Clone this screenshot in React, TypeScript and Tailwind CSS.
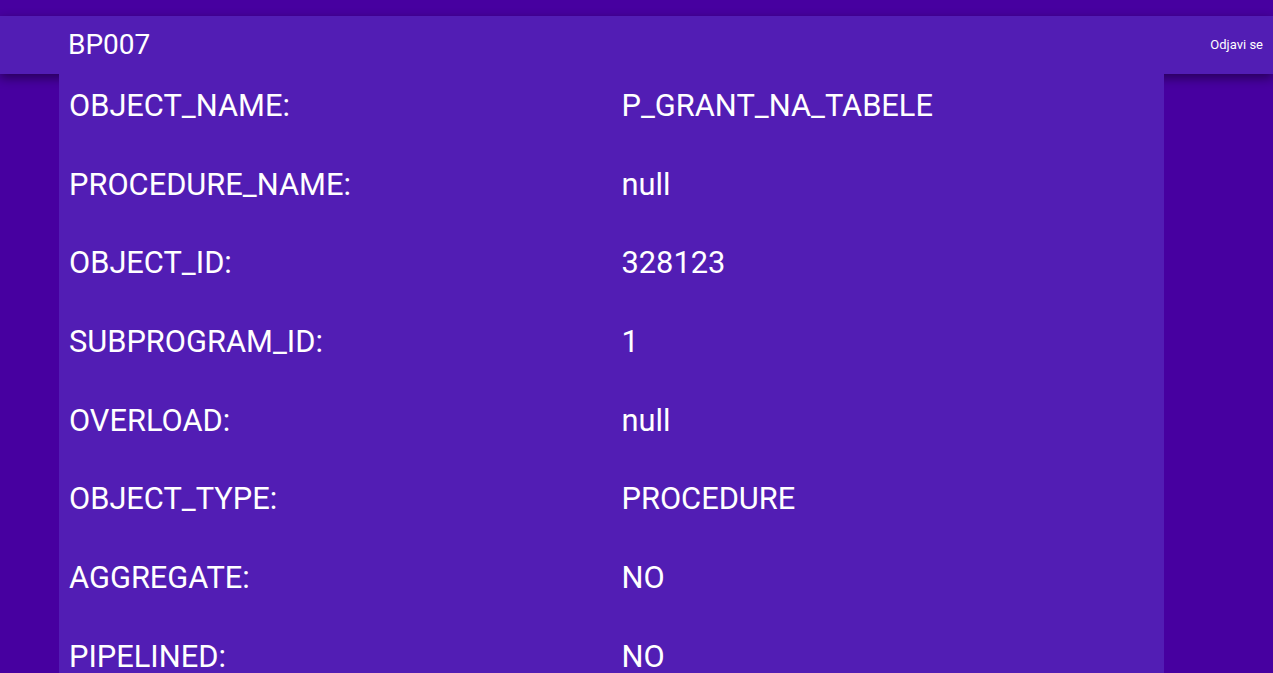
import React from "react";

const rows: [string, string][] = [
  ["OBJECT_NAME:", "P_GRANT_NA_TABELE"],
  ["PROCEDURE_NAME:", "null"],
  ["OBJECT_ID:", "328123"],
  ["SUBPROGRAM_ID:", "1"],
  ["OVERLOAD:", "null"],
  ["OBJECT_TYPE:", "PROCEDURE"],
  ["AGGREGATE:", "NO"],
  ["PIPELINED:", "NO"],
];

export default function App() {
  return (
    <div
      className="min-h-screen bg-[#4700a0] pt-[16px] text-white"
      style={{ fontFamily: "Roboto, 'Liberation Sans', sans-serif" }}
    >
      <header className="relative z-10 flex h-[58px] items-center justify-between bg-[#521db4] pl-[68px] pr-[10px] shadow-[0_4px_10px_rgba(0,0,0,0.45)]">
        <h1 className="text-[28px] font-normal">BP007</h1>
        <button className="text-[13px]">Odjavi se</button>
      </header>
      <main className="relative z-20 ml-[59px] mr-[109px] flex flex-col gap-[14.7px] bg-[#521db4] pb-[20px]">
        {rows.map(([label, value]) => (
          <div key={label} className="grid h-[64px] grid-cols-2 items-center text-[30.8px]">
            <span className="px-[10px]">{label}</span>
            <span className="px-[10px]">{value}</span>
          </div>
        ))}
      </main>
    </div>
  );
}
